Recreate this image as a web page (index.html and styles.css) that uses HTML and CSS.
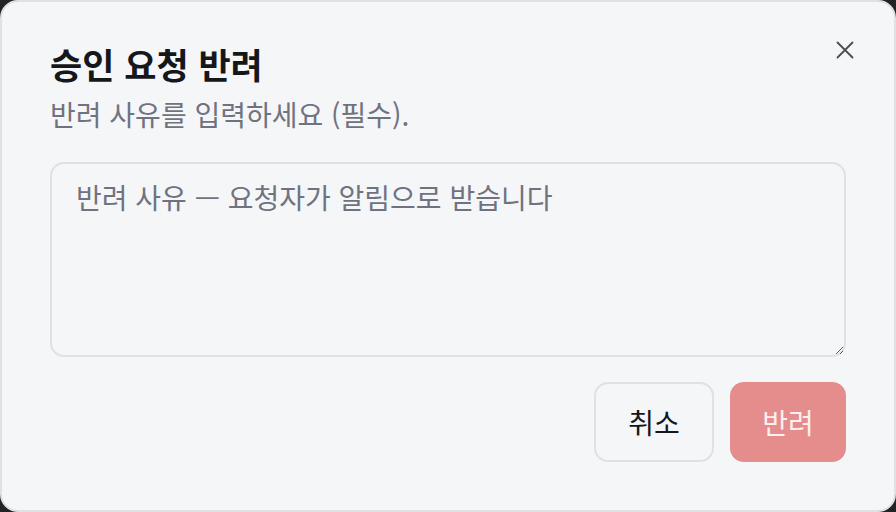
FILE: index.html
```html
<!DOCTYPE html>
<html lang="ko">
<head>
    <meta charset="UTF-8">
    <meta name="viewport" content="width=device-width, initial-scale=1.0">
    <title>승인 요청 반려</title>
    <link rel="stylesheet" href="styles.css">
</head>
<body>
    <div class="dialog" role="dialog" aria-labelledby="dlg-title">
        <button class="close-btn" aria-label="닫기">
            <svg width="24" height="24" viewBox="0 0 24 24" fill="none" stroke="currentColor" stroke-width="2.2" stroke-linecap="round">
                <path d="M3 3L21 21M21 3L3 21"/>
            </svg>
        </button>

        <div class="header">
            <h2 id="dlg-title">승인 요청 반려</h2>
            <p class="desc">반려 사유를 입력하세요 (필수).</p>
        </div>

        <textarea class="reason" placeholder="반려 사유 — 요청자가 알림으로 받습니다"></textarea>

        <div class="actions">
            <button class="btn btn-cancel">취소</button>
            <button class="btn btn-reject" disabled>반려</button>
        </div>
    </div>
</body>
</html>
```

FILE: styles.css
```css
html, body {
    margin: 0;
    height: 100%;
}
body {
    background: #232323;
    font-family: "Noto Sans CJK KR", "Noto Sans", sans-serif;
}
.dialog {
    position: relative;
    box-sizing: border-box;
    width: 896px;
    height: 512px;
    background: #f5f6f8;
    border: 2px solid #dfe1e5;
    border-radius: 18px;
    padding: 40px 48px 48px;
    display: flex;
    flex-direction: column;
}
.close-btn {
    position: absolute;
    top: 32px;
    right: 33px;
    width: 32px;
    height: 32px;
    padding: 0;
    border: none;
    background: none;
    color: #4b4d52;
    display: flex;
    align-items: center;
    justify-content: center;
    cursor: pointer;
}
.close-btn svg {
    width: 20px;
    height: 20px;
}
.header h2 {
    margin: 0;
    font-size: 35px;
    line-height: 44px;
    font-weight: 700;
    color: #16171a;
}
.desc {
    margin: 10px 0 0;
    font-size: 28px;
    line-height: 36px;
    color: #6f7380;
}
.reason {
    box-sizing: border-box;
    margin-top: 30px;
    width: 100%;
    height: 195px;
    flex: none;
    padding: 15px 24px;
    border: 2px solid #dfe1e5;
    border-radius: 14px;
    background: #f5f6f8;
    font-family: inherit;
    font-size: 28px;
    line-height: 36px;
    color: #16171a;
    resize: vertical;
    outline: none;
}
.reason::placeholder {
    color: #6f7380;
}
.actions {
    margin-top: 25px;
    display: flex;
    justify-content: flex-end;
    gap: 16px;
}
.btn {
    box-sizing: border-box;
    height: 80px;
    border-radius: 14px;
    font-family: inherit;
    font-size: 28px;
    padding: 0;
    cursor: pointer;
}
.btn-cancel {
    width: 120px;
    background: #f5f6f8;
    border: 2px solid #dfe1e5;
    color: #16171a;
}
.btn-reject {
    width: 116px;
    background: #e58c8c;
    border: none;
    color: #fdf0f0;
}
```
